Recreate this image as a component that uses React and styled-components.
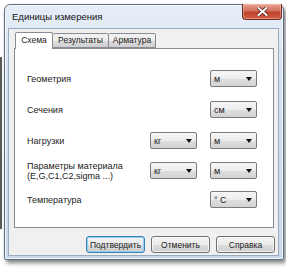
import React from 'react';
import styled, { createGlobalStyle } from 'styled-components';

const GlobalStyle = createGlobalStyle`
  html, body {
    margin: 0;
    padding: 0;
    background: #ffffff;
  }
  body {
    width: 286px;
    height: 268px;
    overflow: hidden;
    font-family: "Liberation Sans", Arial, sans-serif;
    color: #1b1b1b;
  }
`;

const Screen = styled.div`
  width: 286px;
  height: 268px;
  padding: 4px 0 0 4px;
  box-sizing: border-box;
  background: linear-gradient(#5a5a5a, #5a5a5a) 0 57px / 2px 172px no-repeat, #ffffff;
`;

const Window = styled.div`
  width: 280px;
  height: 256px;
  box-sizing: border-box;
  display: flex;
  flex-direction: column;
  border: 1px solid #5f6f83;
  border-radius: 6px 6px 2px 2px;
  background: linear-gradient(180deg, #e6eef8 0%, #d4e1f0 30%, #c9d8ea 100%);
  box-shadow: 2px 3px 4px rgba(0, 0, 0, 0.5), inset 0 0 0 1px rgba(255, 255, 255, 0.7);
`;

const TitleBar = styled.div`
  height: 23px;
  display: flex;
  align-items: flex-start;
  justify-content: space-between;
  padding-left: 7px;
`;

const Title = styled.span`
  font-size: 9.5px;
  line-height: 10px;
  margin-top: 7px;
  color: #111;
`;

const CloseButton = styled.div`
  width: 40px;
  height: 16px;
  margin-top: -1px;
  margin-right: 1px;
  box-sizing: border-box;
  border: 1px solid #6b2b1f;
  border-top: none;
  border-radius: 0 0 4px 4px;
  background: linear-gradient(180deg, #e8a596 0%, #d4705c 45%, #c0432c 55%, #cf5f43 100%);
  display: flex;
  align-items: center;
  justify-content: center;
  box-shadow: inset 0 0 0 1px rgba(255, 200, 190, 0.45);
`;

const Client = styled.div`
  flex: 1;
  margin: 0 4px 3px 3px;
  border: 1px solid #9aabbf;
  background: #f0f0f0;
  padding: 3px 4px 0 5px;
  display: flex;
  flex-direction: column;
`;

const TabStrip = styled.div`
  display: flex;
  align-items: flex-end;
  height: 16px;
  padding-left: 1px;
  position: relative;
  z-index: 1;
`;

const Tab = styled.div`
  box-sizing: border-box;
  width: ${p => p.$w}px;
  height: ${p => (p.$active ? 17 : 15)}px;
  margin-bottom: ${p => (p.$active ? -1 : 0)}px;
  border: 1px solid #898c95;
  border-bottom: ${p => (p.$active ? 'none' : '1px solid #898c95')};
  border-left: ${p => (p.$first || p.$active ? '1px solid #898c95' : 'none')};
  border-radius: 2px 2px 0 0;
  background: ${p =>
    p.$active ? '#ffffff' : 'linear-gradient(180deg, #f3f3f3 0%, #ebebeb 50%, #dddddd 51%, #cfcfcf 100%)'};
  font-size: 8.5px;
  line-height: ${p => (p.$active ? 15 : 13)}px;
  text-align: center;
  white-space: nowrap;
`;

const Panel = styled.div`
  box-sizing: border-box;
  width: 260px;
  height: 180px;
  background: #ffffff;
  border: 1px solid #898c95;
  padding: 21px 16px 0 12px;
`;

const Form = styled.div`
  display: grid;
  grid-template-columns: 1fr 47px 47px;
  grid-template-rows: 31px 31px 30px 29px 17px;
  column-gap: 13px;
  align-items: start;
`;

const Label = styled.div`
  grid-column: 1;
  height: 17px;
  display: flex;
  flex-direction: column;
  justify-content: center;
  font-size: 9px;
  line-height: 10px;
  white-space: nowrap;
`;

const Combo = styled.div`
  grid-column: ${p => p.$col};
  box-sizing: border-box;
  height: 17px;
  border: 1px solid #7a7a7a;
  border-radius: 2px;
  background: linear-gradient(180deg, #f6f6f6 0%, #ececec 50%, #dfdfdf 51%, #d3d3d3 100%);
  display: flex;
  align-items: center;
  justify-content: space-between;
  padding: 0 4px 0 3px;
  font-size: 9px;
`;

const Arrow = styled.span`
  width: 0;
  height: 0;
  border-left: 3px solid transparent;
  border-right: 3px solid transparent;
  border-top: 4px solid #111;
`;

const ButtonRow = styled.div`
  display: flex;
  justify-content: flex-end;
  gap: 6px;
  margin-top: 8px;
  margin-right: -1px;
`;

const Button = styled.div`
  box-sizing: border-box;
  width: 59px;
  height: 17px;
  border: 1px solid ${p => (p.$default ? '#3c7fb1' : '#707070')};
  border-radius: 3px;
  background: linear-gradient(180deg, #f2f2f2 0%, #ebebeb 50%, #dddddd 51%, #cfcfcf 100%);
  box-shadow: ${p => (p.$default ? 'inset 0 0 0 1px #8fd1f5' : 'inset 0 0 0 1px rgba(255,255,255,0.7)')};
  display: flex;
  align-items: center;
  justify-content: center;
  font-size: 8.5px;
  white-space: nowrap;
`;

const Select = ({ col, value }) => (
  <Combo $col={col}>
    <span>{value}</span>
    <Arrow />
  </Combo>
);

const App = () => (
  <>
    <GlobalStyle />
    <Screen>
      <Window>
        <TitleBar>
          <Title>Единицы измерения</Title>
          <CloseButton>
            <svg width="11" height="9" viewBox="0 0 11 9">
              <path d="M1.5 1 L9.5 8 M9.5 1 L1.5 8" stroke="#5a1f14" strokeWidth="3.6" strokeLinecap="square" />
              <path d="M1.5 1 L9.5 8 M9.5 1 L1.5 8" stroke="#ffffff" strokeWidth="2" strokeLinecap="square" />
            </svg>
          </CloseButton>
        </TitleBar>
        <Client>
          <TabStrip>
            <Tab $w={38} $first $active>Схема</Tab>
            <Tab $w={56}>Результаты</Tab>
            <Tab $w={47}>Арматура</Tab>
          </TabStrip>
          <Panel>
            <Form>
              <Label>Геометрия</Label>
              <Select col={3} value="м" />
              <Label>Сечения</Label>
              <Select col={3} value="см" />
              <Label>Нагрузки</Label>
              <Select col={2} value="кг" />
              <Select col={3} value="м" />
              <Label>
                <span>Параметры материала</span>
                <span>(E,G,C1,C2,sigma ...)</span>
              </Label>
              <Select col={2} value="кг" />
              <Select col={3} value="м" />
              <Label>Температура</Label>
              <Select col={3} value="° C" />
            </Form>
          </Panel>
          <ButtonRow>
            <Button $default>Подтвердить</Button>
            <Button>Отменить</Button>
            <Button>Справка</Button>
          </ButtonRow>
        </Client>
      </Window>
    </Screen>
  </>
);

export default App;
